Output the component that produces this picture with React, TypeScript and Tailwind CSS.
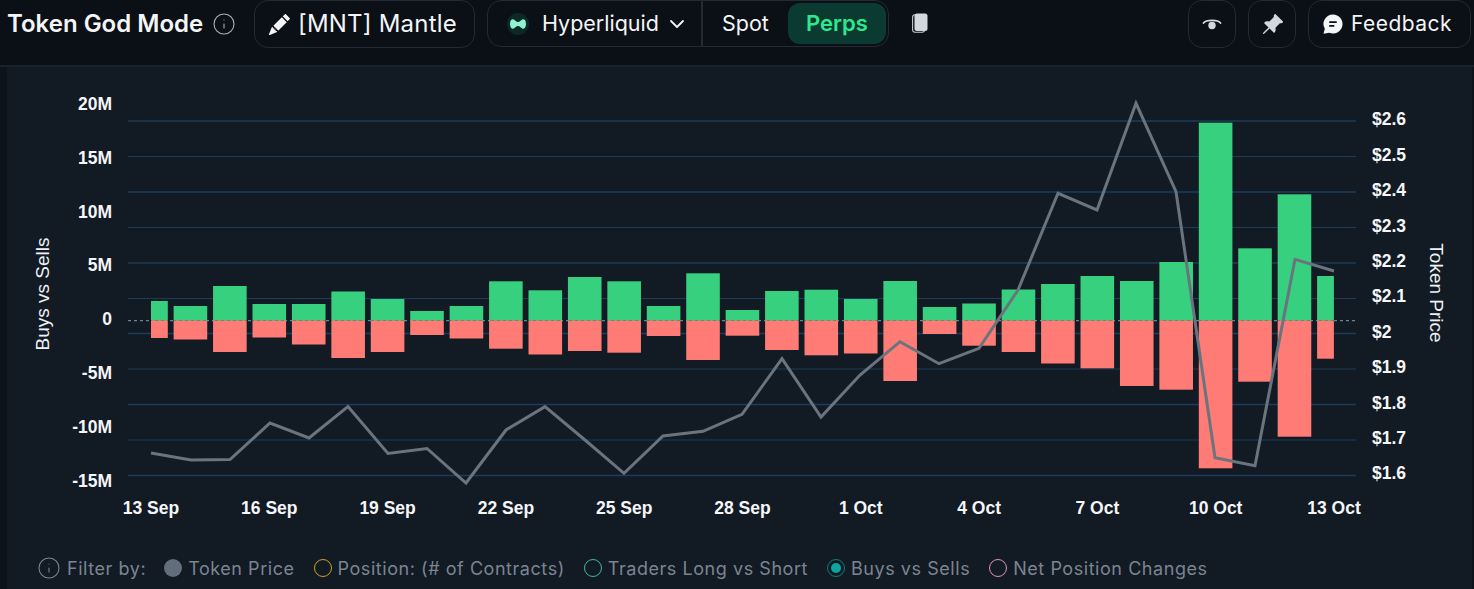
import { ChevronDown, Info } from 'lucide-react'
import { BsPencilFill, BsPinAngleFill } from 'react-icons/bs'

const bars = [
  [301, 338], [306, 339.5], [286, 352], [304, 337.5], [304, 344.5], [291.5, 358],
  [299, 352], [311, 335], [306, 338.5], [281.3, 348.7], [290.3, 354.5], [277, 351],
  [281.3, 352.7], [306, 336], [273.3, 360], [310, 335.7], [291, 350], [289.7, 355.3],
  [299, 353.5], [281, 381], [307, 334], [303.5, 345.7], [289.5, 352], [284, 363.5],
  [276, 368.3], [281, 386], [262, 389.7], [122.7, 468.3], [248.3, 381.7], [194.3, 436.7],
  [276, 358.7],
]

const pricePoints =
  '151,453 191,460 230,459.5 270,423 309,438 348,406.5 388,453.5 427,448.5 466,483 506,430 545,406.7 585,440 624,473.3 663,436 703,431.3 742,414.3 782,358.7 821,417 860,375 900,341.7 939,363.7 979,348.3 1018,290 1058,193.3 1097,210 1136,103.3 1176,191.7 1215,457.7 1255,465.7 1295,259.3 1334,271'

const gridY = [121, 156.5, 192, 227.5, 263, 298.5, 333.5, 369, 404.5, 440, 475.5]
const leftTicks = ['20M', '15M', '10M', '5M', '0', '-5M', '-10M', '-15M']
const leftY = [104, 157.5, 211.5, 265, 319, 372.5, 427, 481]
const rightTicks = ['$2.6', '$2.5', '$2.4', '$2.3', '$2.2', '$2.1', '$2', '$1.9', '$1.8', '$1.7', '$1.6']
const rightY = [119, 155, 190, 226, 261, 296, 332, 367, 403, 438, 473]
const dates = ['13 Sep', '16 Sep', '19 Sep', '22 Sep', '25 Sep', '28 Sep', '1 Oct', '4 Oct', '7 Oct', '10 Oct', '13 Oct']

function Chart() {
  return (
    <svg viewBox="7 67 1465 470" className="block w-[1465px] h-[470px] shrink-0">
      <g fontFamily="'Liberation Sans', Arial, sans-serif">
        {gridY.map((y, i) => (
          <line key={y} x1="128" x2="1356" y1={y} y2={y} stroke="#1c3d59" strokeWidth={i % 2 === 0 ? 1.7 : 1.2} />
        ))}
        <line x1="128" x2="1356" y1="320.6" y2="320.6" stroke="#6b8296" strokeWidth="1.2" strokeDasharray="3 3" />
        {bars.map(([top, bottom], i) => {
          const center = 151 + i * 39.43
          let x = center - 16.8
          let w = 33.6
          if (i === 0) {
            x = center
            w = 16.8
          }
          if (i === 30) w = 16.8
          return (
            <g key={i}>
              <rect x={x} y={top} width={w} height={320.6 - top} fill="#36d07f" />
              <rect x={x} y={320.6} width={w} height={bottom - 320.6} fill="#ff7b75" />
            </g>
          )
        })}
        <polyline points={pricePoints} fill="none" stroke="#69747f" strokeWidth="3" strokeLinejoin="miter" />
        {leftTicks.map((t, i) => (
          <text key={t} x="112" y={leftY[i]} dy="6" textAnchor="end" fontSize="17.5" fontWeight="700" fill="#f4f6f8">
            {t}
          </text>
        ))}
        {rightTicks.map((t, i) => (
          <text key={t} x="1372" y={rightY[i]} dy="6" fontSize="17.5" fontWeight="700" fill="#f4f6f8">
            {t}
          </text>
        ))}
        {dates.map((d, i) => (
          <text key={d} x={151 + i * 118.3} y="514" textAnchor="middle" fontSize="17.5" fontWeight="700" fill="#f4f6f8">
            {d}
          </text>
        ))}
        <text transform="translate(49 294) rotate(-90)" textAnchor="middle" fontSize="19" fill="#eef1f4">
          Buys vs Sells
        </text>
        <text transform="translate(1430 293) rotate(90)" textAnchor="middle" fontSize="19" fill="#eef1f4">
          Token Price
        </text>
      </g>
    </svg>
  )
}

function Ring({ color }: { color: string }) {
  return <span className={`w-[18px] h-[18px] rounded-full border-[1.5px] shrink-0 ${color}`} />
}

function FilterLabel({ children }: { children: string }) {
  return <span className="ml-[6px] mr-[19px] whitespace-nowrap">{children}</span>
}

export default function App() {
  return (
    <div className="w-[1474px] h-[589px] overflow-hidden bg-[#0b0f16] text-[#f3f5f7] font-['Inter',sans-serif] flex flex-col">
      <header className="h-[65px] shrink-0 flex items-start pl-[7px] pr-[3px]">
        <div className="h-[47px] flex items-center text-[24px] font-semibold whitespace-nowrap w-[198px]">Token God Mode</div>
        <Info size={24} strokeWidth={1.1} className="ml-[7px] mt-[12px] text-[#aab2bb]" />
        <button className="ml-[18px] w-[221px] h-[48px] border border-[#232a33] rounded-[14px] flex items-center pl-[14px] text-[24px] tracking-[0.2px]">
          <BsPencilFill size={21} className="mr-[8px]" />
          [MNT] Mantle
        </button>
        <div className="ml-[12px] w-[402px] h-[47px] border border-[#232a33] rounded-[14px] flex items-stretch">
          <div className="w-[215px] border-r-2 border-[#232a33] flex items-center pl-[19px] text-[21.5px]">
            <svg viewBox="0 0 22 22" className="w-[22px] h-[22px] mr-[13px] shrink-0">
              <circle cx="11" cy="11" r="11" fill="#0b2a26" />
              <path d="M3 11c0-4 2-5.200 3.800-4.500 1.500.6 2.300 2.500 4.200 2.500s2.700-1.900 4.200-2.500C17 5.800 19 7 19 11s-2 5.200-3.800 4.500c-1.500-.6-2.300-2.500-4.200-2.500s-2.700 1.900-4.200 2.500C5 16.200 3 15 3 11z" fill="#8ff0d2" />
            </svg>
            Hyperliquid
            <ChevronDown size={24} strokeWidth={1.8} className="ml-[6px]" />
          </div>
          <div className="flex-1 flex items-center pl-[19px] text-[21.5px]">
            Spot
            <span className="ml-[19px] w-[98px] h-[41px] rounded-[12px] bg-[#0b3a30] text-[#2ee88f] text-[22px] font-semibold flex items-center justify-center">
              Perps
            </span>
          </div>
        </div>
        <svg viewBox="0 0 16 20" className="ml-[23px] mt-[13px] w-[16px] h-[20px]">
          <rect x="0.6" y="1.800" width="12" height="17.400" rx="2.500" fill="none" stroke="#c4cad3" strokeWidth="1.100" />
          <rect x="2.500" y="0.500" width="13" height="17.500" rx="2.500" fill="#d3d8df" />
        </svg>
        <button className="ml-auto w-[48px] h-[48px] border border-[#232a33] rounded-[14px] flex items-center justify-center">
          <svg viewBox="0 0 20 20" className="w-[20px] h-[20px]">
            <path d="M1.500 9C4 5.500 16 5.500 18.500 9" fill="none" stroke="#d3d8df" strokeWidth="1.800" strokeLinecap="round" />
            <circle cx="10" cy="11.500" r="3.700" fill="#d3d8df" />
          </svg>
        </button>
        <button className="ml-[12px] w-[48px] h-[48px] border border-[#232a33] rounded-[14px] flex items-center justify-center">
          <BsPinAngleFill size={23} className="text-[#d3d8df]" />
        </button>
        <button className="ml-[12px] w-[163px] h-[48px] border border-[#232a33] rounded-[14px] flex items-center pl-[14px] text-[21px] tracking-[0.45px]">
          <svg viewBox="0 0 20 20" className="w-[20px] h-[20px] mr-[8px] shrink-0">
            <path d="M10 0.500a9.500 9.500 0 1 1-3.800 18.200L0.500 19.800l1.300-5A9.500 9.500 0 0 1 10 0.500z" fill="#f3f5f7" />
            <rect x="6" y="7.200" width="8" height="1.800" rx="0.900" fill="#0b0f16" />
            <rect x="6" y="11" width="5.500" height="1.800" rx="0.900" fill="#0b0f16" />
          </svg>
          Feedback
        </button>
      </header>

      <div className="flex-1 flex flex-col border-t-2 border-[#1a222c] bg-[#0d131b]">
        <div className="flex-1 flex ml-[7px] mr-[2px] bg-[#121a24]">
          <div className="flex flex-col">
            <Chart />
            <div className="flex items-center h-[40px] pl-[30px] mt-[11px] text-[18px] tracking-[0.55px] text-[#7b8592]">
              <Info size={24} strokeWidth={1.1} className="shrink-0" />
              <span className="ml-[6px] mr-[18px] whitespace-nowrap">Filter by:</span>
              <span className="w-[18px] h-[18px] rounded-full bg-[#626e7c] shrink-0" />
              <FilterLabel>Token Price</FilterLabel>
              <Ring color="border-[#c9a227]" />
              <FilterLabel>Position: (# of Contracts)</FilterLabel>
              <Ring color="border-[#3fb6a8]" />
              <FilterLabel>Traders Long vs Short</FilterLabel>
              <span className="w-[18px] h-[18px] rounded-full border-[1.5px] border-[#0f7f7c] flex items-center justify-center shrink-0">
                <span className="w-[10px] h-[10px] rounded-full bg-[#0ea5a0]" />
              </span>
              <FilterLabel>Buys vs Sells</FilterLabel>
              <Ring color="border-[#e58fb5]" />
              <FilterLabel>Net Position Changes</FilterLabel>
            </div>
          </div>
        </div>
      </div>
    </div>
  )
}
